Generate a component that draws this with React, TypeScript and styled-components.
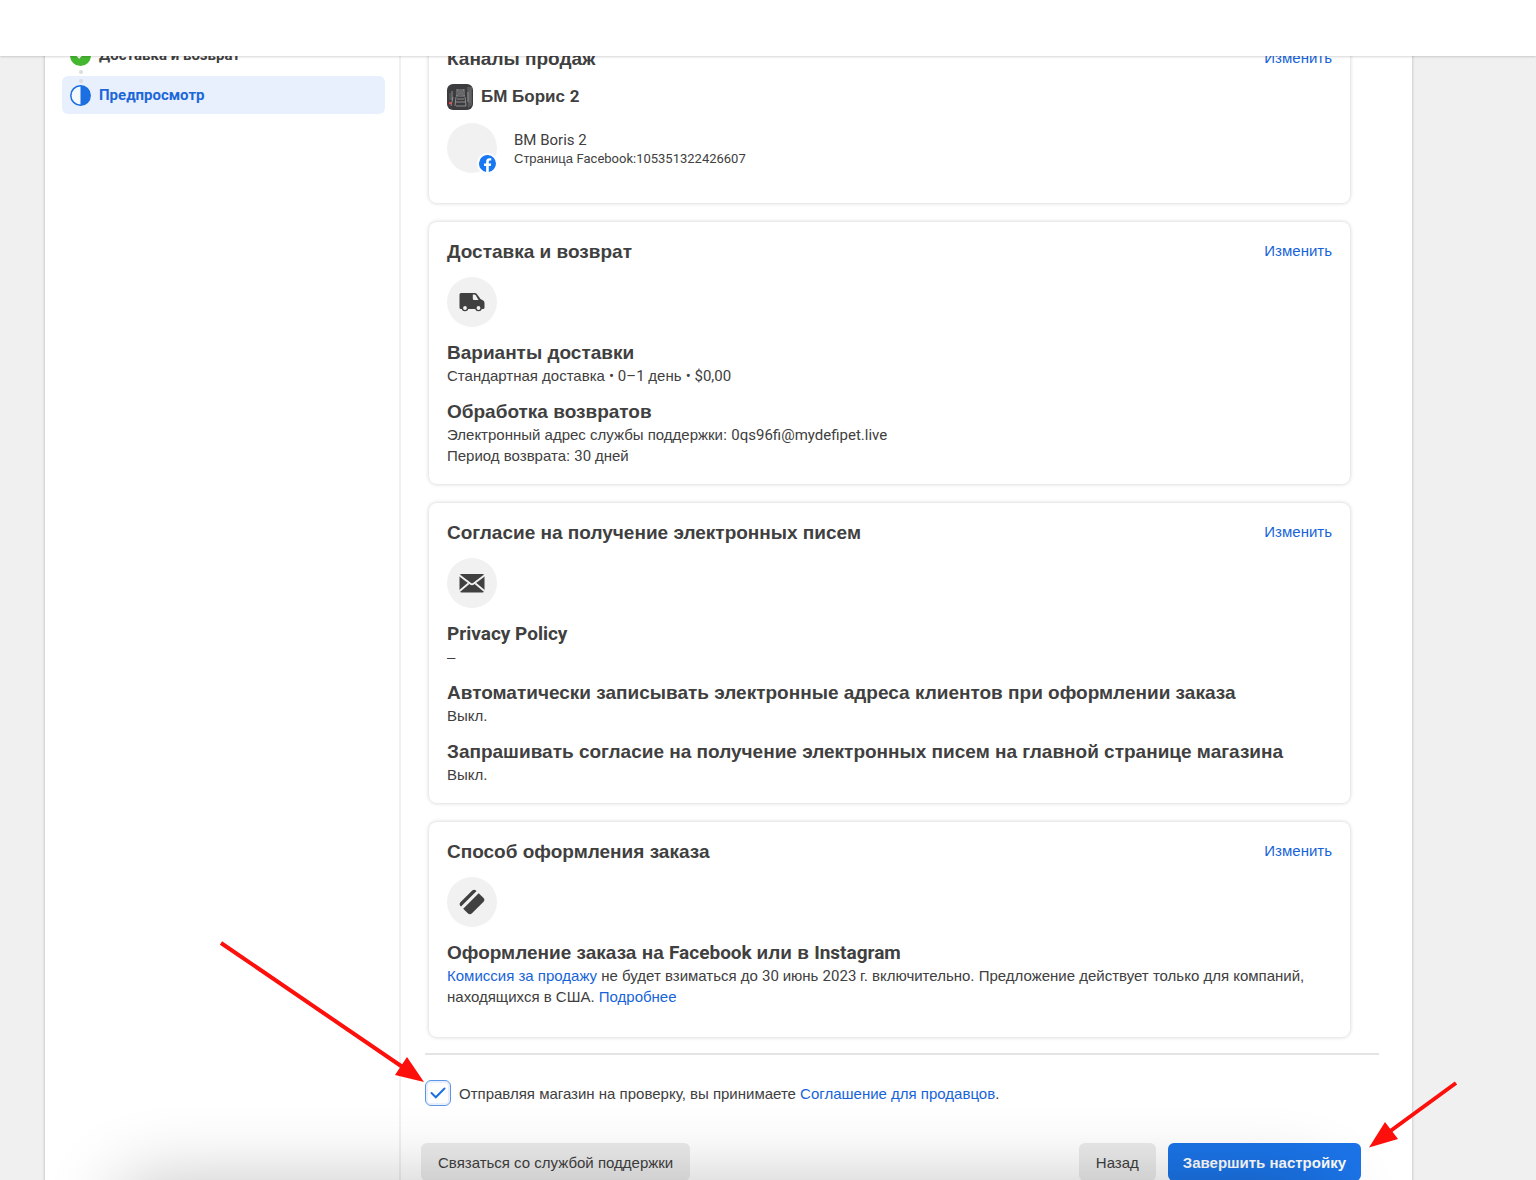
import React, { useState } from 'react';
import styled, { createGlobalStyle, css } from 'styled-components';

const latinFont = 'Roboto, sans-serif';
const baseFont = '"Liberation Sans", Arial, sans-serif';

const GlobalStyle = createGlobalStyle`
  *, *::before, *::after { box-sizing: border-box; }
  body {
    margin: 0;
    background: #f0f0f0;
    color: #404040;
    font: 15px/21px ${baseFont};
    overflow: hidden;
  }
  h2, h3, p { margin: 0; }
`;

const Shell = styled.div`
  position: relative;
  display: flex;
  flex-direction: column;
  height: 100vh;
  overflow: hidden;
`;

const TopBar = styled.header`
  flex: none;
  height: 56px;
  background: #fff;
  box-shadow: 0 1px 2px rgba(0, 0, 0, 0.16);
  z-index: 2;
`;

const Viewport = styled.div`
  flex: 1;
  min-height: 0;
  overflow: hidden;
`;

const Panel = styled.div`
  display: flex;
  min-height: 100vh;
  margin: -27px 124px 0 45px;
  background: #fff;
  box-shadow: 0 0 3px rgba(0, 0, 0, 0.25);
`;

const Sidebar = styled.nav`
  display: flex;
  flex-direction: column;
  gap: 2px;
  flex: 0 0 356px;
  padding: 7px 14px 0 17px;
  border-right: 2px solid #f0f0f0;
`;

const Step = styled.a<{ $active?: boolean }>`
  position: relative;
  display: flex;
  align-items: center;
  gap: 8px;
  height: 38px;
  padding: 0 8px;
  border-radius: 6px;
  color: #404040;
  font-family: ${latinFont};
  font-weight: 700;
  text-decoration: none;
  ${(p) => p.$active && css`
    background: #e9f0fd;
    color: #1b67d9;
  `}
`;

const StepDots = styled.span`
  position: absolute;
  left: 17px;
  top: 34px;
  display: grid;
  gap: 5px;
  z-index: 1;
  &::before, &::after {
    content: '';
    width: 4px;
    height: 4px;
    border-radius: 50%;
    background: #dcdcdc;
  }
`;

const Main = styled.main`
  flex: 1;
  min-width: 0;
`;

const Cards = styled.div`
  display: flex;
  flex-direction: column;
  gap: 19px;
  margin: 0 62px 0 28px;
`;

const CardBox = styled.section<{ $roomy?: boolean }>`
  padding: 18px 18px ${(p) => (p.$roomy ? 30 : 18)}px;
  border-radius: 8px;
  background: #fff;
  box-shadow: 0 0 4px rgba(0, 0, 0, 0.2);
`;

const CardHead = styled.div`
  display: flex;
  justify-content: space-between;
  align-items: flex-start;
  margin-bottom: 13px;
`;

const Title = styled.h2`
  font-size: 19px;
  line-height: 24px;
  font-weight: 700;
`;

const Link = styled.a`
  color: #1764d8;
  text-decoration: none;
`;

const Circle = styled.div`
  position: relative;
  display: grid;
  place-items: center;
  flex: none;
  width: 50px;
  height: 50px;
  border-radius: 50%;
  background: #f1f1f1;
`;

const Badge = styled.span`
  position: absolute;
  right: -1px;
  bottom: -1px;
  display: grid;
  padding: 2px;
  border-radius: 50%;
  background: #fff;
`;

const Field = styled.div`
  margin-top: 14px;
`;

const FieldTitle = styled.h3`
  font-size: 19px;
  line-height: 24px;
  font-weight: 700;
`;

const ShopRow = styled.div`
  display: flex;
  align-items: center;
  gap: 8px;
  height: 26px;
  margin-bottom: 13px;
`;

const ShopName = styled.h3`
  font-size: 17px;
  line-height: 24px;
  font-weight: 700;
`;

const PageRow = styled.div`
  display: flex;
  align-items: center;
  gap: 17px;
`;

const Small = styled.p`
  font-size: 13px;
  line-height: 18px;
`;

const LatinText = styled.span`
  font-family: ${latinFont};
  line-height: 1;
`;

const Divider = styled.hr`
  height: 2px;
  margin: 16px 33px 25px 24px;
  border: 0;
  background: #e4e4e4;
`;

const Agreement = styled.div`
  display: flex;
  align-items: center;
  gap: 8px;
  margin: 0 33px 37px 24px;
`;

const CheckWrap = styled.span`
  position: relative;
  display: grid;
  width: 26px;
  height: 26px;
`;

const CheckInput = styled.input`
  appearance: none;
  width: 26px;
  height: 26px;
  margin: 0;
  border: 1px solid #5b95e8;
  border-radius: 6px;
  background: #fff;
  box-shadow: inset 0 0 0 2px #e9f0fc;
  & + svg { display: none; }
  &:checked + svg { display: block; }
`;

const CheckMark = styled.svg`
  position: absolute;
  inset: 0;
  pointer-events: none;
`;

const Actions = styled.div`
  display: flex;
  gap: 12px;
  margin: 0 51px 0 20px;
`;

const Button = styled.button<{ $primary?: boolean; $start?: boolean }>`
  height: 38px;
  padding: 0 ${(p) => (p.$primary ? 15 : 17)}px;
  border: 0;
  border-radius: 6px;
  background: ${(p) => (p.$primary ? '#1b74e8' : '#ebebeb')};
  color: ${(p) => (p.$primary ? '#fff' : '#404040')};
  font: ${(p) => (p.$primary ? 700 : 400)} 15px/21px ${baseFont};
  white-space: nowrap;
  margin-right: ${(p) => (p.$start ? 'auto' : '0')};
`;

const WindowShadow = styled.div`
  position: absolute;
  left: 125px;
  right: 215px;
  top: calc(100% + 10px);
  height: 60px;
  border-radius: 20px;
  box-shadow: 0 0 75px 8px rgba(0, 0, 0, 0.24);
  pointer-events: none;
`;

const Arrows = styled.svg`
  position: absolute;
  inset: 0;
  pointer-events: none;
`;

/* Latin letters and digits are set in Roboto, Cyrillic in the base face. */
const Text = ({ children }: { children: string }) => (
  <>
    {children.split(/([A-Za-z0-9$–•@][A-Za-z0-9$–•@.,:\s]*)/).map((part, i) =>
      i % 2 ? <LatinText key={i}>{part}</LatinText> : part,
    )}
  </>
);

const Card = ({ title, roomy, children }: { title: string; roomy?: boolean; children: React.ReactNode }) => (
  <CardBox $roomy={roomy}>
    <CardHead>
      <Title>{title}</Title>
      <Link href="#edit">Изменить</Link>
    </CardHead>
    {children}
  </CardBox>
);

const Item = ({ title, children }: { title: string; children: React.ReactNode }) => (
  <Field>
    <FieldTitle><Text>{title}</Text></FieldTitle>
    {children}
  </Field>
);

const DoneIcon = () => (
  <svg width="21" height="21" viewBox="0 0 21 21" aria-hidden="true">
    <circle cx="10.5" cy="10.5" r="10.5" fill="#45b62f" />
    <path d="M6 9l3.2 3.2 6-6.4" fill="none" stroke="#fff" strokeWidth="2.2" />
  </svg>
);

const HalfIcon = () => (
  <svg width="21" height="21" viewBox="0 0 21 21" aria-hidden="true">
    <circle cx="10.5" cy="10.5" r="9.7" fill="#f4f8ff" stroke="#1b6fe0" strokeWidth="1.5" />
    <path d="M10.5.8a9.7 9.7 0 010 19.4z" fill="#1b6fe0" />
  </svg>
);

const FacebookIcon = () => (
  <svg width="17" height="17" viewBox="0 0 24 24" aria-hidden="true">
    <path fill="#1877f2" d="M24 12a12 12 0 10-13.9 11.9v-8.4H7.1V12h3V9.4c0-3 1.8-4.7 4.5-4.7 1.3 0 2.7.2 2.7.2v3h-1.5c-1.5 0-2 .9-2 1.9V12h3.4l-.5 3.5h-2.9v8.400A12 12 0 0024 12z" />
  </svg>
);

const ShopPicture = () => (
  <svg width="26" height="26" viewBox="0 0 26 26" aria-hidden="true">
    <rect width="26" height="26" rx="6" fill="#3c3c3e" />
    <path d="M20 3h5v18l-4 3z" fill="#59595b" />
    <g fill="none" stroke="#a3a3a5" strokeWidth=".8">
      <path d="M10 6h7M10 5v7M17 5v7M9 12h9M8 22l1-9M19 22l-1-9M10 15h7M9 18h9M9 22h10M5 7v9M6 13l-2 9M21 8v10" />
      <path d="M23 6v13M3 9v7" stroke="#707072" />
    </g>
    <path d="M11 7h5v4h-5z" fill="#68686a" />
    <rect x="2" y="18" width="2.4" height="2.2" fill="#f04545" />
  </svg>
);

const TruckIcon = () => (
  <svg width="26" height="20" viewBox="0 0 26 20" aria-hidden="true">
    <path fill="#404040" d="M2 1h13.5c1.2 0 2 .5 2.7 1.5L21.500 7l2.700 1.500Q25.500 9.300 25.500 11v4.500q0 1.500-1.500 1.500H2q-1.500 0-1.500-1.500v-13Q.5 1 2 1z" />
    <path fill="#f1f1f1" d="M13.800 2.500h1.600q.8 0 1.300.8L19.500 8h-4.500q-1.200 0-1.200-1.200z" />
    <circle cx="6" cy="16" r="2.600" fill="#f1f1f1" stroke="#404040" strokeWidth="1.400" />
    <circle cx="19.500" cy="16" r="2.600" fill="#f1f1f1" stroke="#404040" strokeWidth="1.400" />
  </svg>
);

const MailIcon = () => (
  <svg width="26" height="20" viewBox="0 0 26 20" aria-hidden="true">
    <rect x=".5" y="1" width="25" height="18.5" rx="2" fill="#404040" />
    <path d="M0 2l11.500 8.700q1.500 1.100 3 0L26 2M0 18.500l9.500-8M26 18.500l-9.500-8" fill="none" stroke="#f1f1f1" strokeWidth="1.900" />
  </svg>
);

const CardIcon = () => (
  <svg width="28" height="28" viewBox="0 0 28 28" aria-hidden="true">
    <g transform="rotate(-45 14 14)" fill="#404040">
      <path d="M3 9.500V9a3 3 0 013-3h16a3 3 0 013 3v.5z" />
      <path d="M3 12.500h22V19a3 3 0 01-3 3H6a3 3 0 01-3-3z" />
    </g>
  </svg>
);

export default function App() {
  const [accepted, setAccepted] = useState(true);
  return (
    <>
      <GlobalStyle />
      <Shell>
        <TopBar />
        <Viewport>
          <Panel>
            <Sidebar>
              <Step href="#shipping"><DoneIcon />Доставка и возврат<StepDots /></Step>
              <Step href="#preview" $active><HalfIcon />Предпросмотр</Step>
            </Sidebar>
            <Main>
              <Cards>
                <Card title="Каналы продаж" roomy>
                  <ShopRow><ShopPicture /><ShopName><Text>БМ Борис 2</Text></ShopName></ShopRow>
                  <PageRow>
                    <Circle><Badge><FacebookIcon /></Badge></Circle>
                    <div>
                      <p><Text>BM Boris 2</Text></p>
                      <Small><Text>Страница Facebook:105351322426607</Text></Small>
                    </div>
                  </PageRow>
                </Card>
                <Card title="Доставка и возврат">
                  <Circle><TruckIcon /></Circle>
                  <Item title="Варианты доставки">
                    <p><Text>Стандартная доставка • 0–1 день • $0,00</Text></p>
                  </Item>
                  <Item title="Обработка возвратов">
                    <p><Text>Электронный адрес службы поддержки: 0qs96fi@mydefipet.live</Text></p>
                    <p><Text>Период возврата: 30 дней</Text></p>
                  </Item>
                </Card>
                <Card title="Согласие на получение электронных писем">
                  <Circle><MailIcon /></Circle>
                  <Item title="Privacy Policy"><p>–</p></Item>
                  <Item title="Автоматически записывать электронные адреса клиентов при оформлении заказа"><p>Выкл.</p></Item>
                  <Item title="Запрашивать согласие на получение электронных писем на главной странице магазина"><p>Выкл.</p></Item>
                </Card>
                <Card title="Способ оформления заказа" roomy>
                  <Circle><CardIcon /></Circle>
                  <Item title="Оформление заказа на Facebook или в Instagram">
                    <p>
                      <Link href="#fee">Комиссия за продажу</Link>
                      <Text>{' не будет взиматься до 30 июнь 2023 г. включительно. Предложение действует только для компаний, находящихся в США. '}</Text>
                      <Link href="#more">Подробнее</Link>
                    </p>
                  </Item>
                </Card>
              </Cards>
              <Divider />
              <Agreement>
                <CheckWrap>
                  <CheckInput id="accept" type="checkbox" checked={accepted} onChange={(e) => setAccepted(e.target.checked)} />
                  <CheckMark width="26" height="26" viewBox="0 0 26 26" aria-hidden="true">
                    <path d="M6.500 13l4.300 4.300L19.500 8.500" fill="none" stroke="#1b6fe0" strokeWidth="2" strokeLinecap="round" />
                  </CheckMark>
                </CheckWrap>
                <label htmlFor="accept">
                  Отправляя магазин на проверку, вы принимаете <Link href="#terms">Соглашение для продавцов</Link>.
                </label>
              </Agreement>
              <Actions>
                <Button type="button" $start>Связаться со службой поддержки</Button>
                <Button type="button">Назад</Button>
                <Button type="button" $primary>Завершить настройку</Button>
              </Actions>
            </Main>
          </Panel>
        </Viewport>
        <WindowShadow />
        <Arrows width="1536" height="1180" viewBox="0 0 1536 1180" aria-hidden="true">
          <g stroke="#fd0f0b" strokeWidth="4" fill="#fd0f0b">
            <path d="M221 943L404 1068M1456 1083L1389 1132" />
            <path stroke="none" d="M424 1082L407 1057L395 1075zM1369 1147.500L1385 1122L1398 1139z" />
          </g>
        </Arrows>
      </Shell>
    </>
  );
}
